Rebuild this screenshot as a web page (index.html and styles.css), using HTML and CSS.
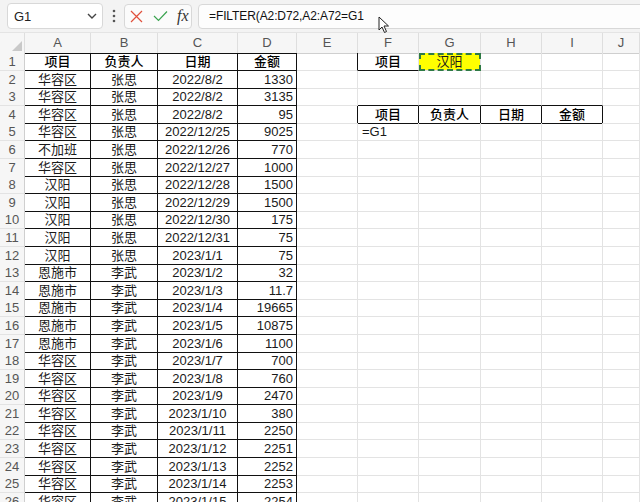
FILE: index.html
```html
<!DOCTYPE html>
<html lang="zh-CN">

<head>
    <meta charset="utf-8">
    <title>FILTER</title>
    <link rel="stylesheet" href="styles.css">
</head>

<body>
    <!-- name box + formula bar -->
    <div class="toolbar">
        <div class="name-box">
            <span>G1</span>
            <svg width="10" height="6" viewBox="0 0 10 6"><path d="M1 1 L5 5 L9 1" fill="none" stroke="#444" stroke-width="1.4"/></svg>
        </div>
        <svg class="more" width="4" height="16" viewBox="0 0 4 16"><circle cx="2" cy="3" r="1.3" fill="#555"/><circle cx="2" cy="8" r="1.3" fill="#555"/><circle cx="2" cy="13" r="1.3" fill="#555"/></svg>
        <div class="fx-box">
            <svg width="13" height="13" viewBox="0 0 13 13"><path d="M1 1 L12 12 M12 1 L1 12" stroke="#e0503c" stroke-width="1.2"/></svg>
            <svg width="15" height="12" viewBox="0 0 15 12"><path d="M1 6 L5.5 10.5 L14 1.5" fill="none" stroke="#3aa34f" stroke-width="1.2"/></svg>
            <span class="fx">fx</span>
        </div>
        <div class="formula-box">=FILTER(A2:D72,A2:A72=G1</div>
    </div>

    <div class="sheet">
        <div class="row head">
            <div class="hd corner"><svg width="10" height="10" viewBox="0 0 10 10"><path d="M10 0 L10 10 L0 10 Z" fill="#c9c9c9"/></svg></div>
            <div class="hd bb">A</div><div class="hd bb">B</div><div class="hd bb">C</div><div class="hd bb">D</div>
            <div class="hd">E</div><div class="hd">F</div><div class="hd">G</div><div class="hd">H</div><div class="hd">I</div><div class="hd">J</div>
        </div>
        <div class="row">
            <div class="rh">1</div>
            <div class="c b ct bold">项目</div><div class="c b ct bold">负责人</div><div class="c b ct bold">日期</div><div class="c b ct bold">金额</div>
            <div class="c br"></div><div class="c bb ct bold">项目</div><div class="c ct sel">汉阳</div><div class="c"></div><div class="c"></div><div class="c"></div>
        </div>
        <div class="row">
            <div class="rh">2</div>
            <div class="c b ct">华容区</div><div class="c b ct">张思</div><div class="c b ct">2022/8/2</div><div class="c b cr">1330</div>
            <div class="c"></div><div class="c"></div><div class="c"></div><div class="c"></div><div class="c"></div><div class="c"></div>
        </div>
        <div class="row">
            <div class="rh">3</div>
            <div class="c b ct">华容区</div><div class="c b ct">张思</div><div class="c b ct">2022/8/2</div><div class="c b cr">3135</div>
            <div class="c"></div><div class="c bb"></div><div class="c bb"></div><div class="c bb"></div><div class="c bb"></div><div class="c"></div>
        </div>
        <div class="row">
            <div class="rh">4</div>
            <div class="c b ct">华容区</div><div class="c b ct">张思</div><div class="c b ct">2022/8/2</div><div class="c b cr">95</div>
            <div class="c br"></div><div class="c b ct bold">项目</div><div class="c b ct bold">负责人</div><div class="c b ct bold">日期</div><div class="c b ct bold">金额</div><div class="c"></div>
        </div>
        <div class="row">
            <div class="rh">5</div>
            <div class="c b ct">华容区</div><div class="c b ct">张思</div><div class="c b ct">2022/12/25</div><div class="c b cr">9025</div>
            <div class="c"></div><div class="c cl">=G1</div><div class="c"></div><div class="c"></div><div class="c"></div><div class="c"></div>
        </div>
        <div class="row">
            <div class="rh">6</div>
            <div class="c b ct">不加班</div><div class="c b ct">张思</div><div class="c b ct">2022/12/26</div><div class="c b cr">770</div>
            <div class="c"></div><div class="c"></div><div class="c"></div><div class="c"></div><div class="c"></div><div class="c"></div>
        </div>
        <div class="row">
            <div class="rh">7</div>
            <div class="c b ct">华容区</div><div class="c b ct">张思</div><div class="c b ct">2022/12/27</div><div class="c b cr">1000</div>
            <div class="c"></div><div class="c"></div><div class="c"></div><div class="c"></div><div class="c"></div><div class="c"></div>
        </div>
        <div class="row">
            <div class="rh">8</div>
            <div class="c b ct">汉阳</div><div class="c b ct">张思</div><div class="c b ct">2022/12/28</div><div class="c b cr">1500</div>
            <div class="c"></div><div class="c"></div><div class="c"></div><div class="c"></div><div class="c"></div><div class="c"></div>
        </div>
        <div class="row">
            <div class="rh">9</div>
            <div class="c b ct">汉阳</div><div class="c b ct">张思</div><div class="c b ct">2022/12/29</div><div class="c b cr">1500</div>
            <div class="c"></div><div class="c"></div><div class="c"></div><div class="c"></div><div class="c"></div><div class="c"></div>
        </div>
        <div class="row">
            <div class="rh">10</div>
            <div class="c b ct">汉阳</div><div class="c b ct">张思</div><div class="c b ct">2022/12/30</div><div class="c b cr">175</div>
            <div class="c"></div><div class="c"></div><div class="c"></div><div class="c"></div><div class="c"></div><div class="c"></div>
        </div>
        <div class="row">
            <div class="rh">11</div>
            <div class="c b ct">汉阳</div><div class="c b ct">张思</div><div class="c b ct">2022/12/31</div><div class="c b cr">75</div>
            <div class="c"></div><div class="c"></div><div class="c"></div><div class="c"></div><div class="c"></div><div class="c"></div>
        </div>
        <div class="row">
            <div class="rh">12</div>
            <div class="c b ct">汉阳</div><div class="c b ct">张思</div><div class="c b ct">2023/1/1</div><div class="c b cr">75</div>
            <div class="c"></div><div class="c"></div><div class="c"></div><div class="c"></div><div class="c"></div><div class="c"></div>
        </div>
        <div class="row">
            <div class="rh">13</div>
            <div class="c b ct">恩施市</div><div class="c b ct">李武</div><div class="c b ct">2023/1/2</div><div class="c b cr">32</div>
            <div class="c"></div><div class="c"></div><div class="c"></div><div class="c"></div><div class="c"></div><div class="c"></div>
        </div>
        <div class="row">
            <div class="rh">14</div>
            <div class="c b ct">恩施市</div><div class="c b ct">李武</div><div class="c b ct">2023/1/3</div><div class="c b cr">11.7</div>
            <div class="c"></div><div class="c"></div><div class="c"></div><div class="c"></div><div class="c"></div><div class="c"></div>
        </div>
        <div class="row">
            <div class="rh">15</div>
            <div class="c b ct">恩施市</div><div class="c b ct">李武</div><div class="c b ct">2023/1/4</div><div class="c b cr">19665</div>
            <div class="c"></div><div class="c"></div><div class="c"></div><div class="c"></div><div class="c"></div><div class="c"></div>
        </div>
        <div class="row">
            <div class="rh">16</div>
            <div class="c b ct">恩施市</div><div class="c b ct">李武</div><div class="c b ct">2023/1/5</div><div class="c b cr">10875</div>
            <div class="c"></div><div class="c"></div><div class="c"></div><div class="c"></div><div class="c"></div><div class="c"></div>
        </div>
        <div class="row">
            <div class="rh">17</div>
            <div class="c b ct">恩施市</div><div class="c b ct">李武</div><div class="c b ct">2023/1/6</div><div class="c b cr">1100</div>
            <div class="c"></div><div class="c"></div><div class="c"></div><div class="c"></div><div class="c"></div><div class="c"></div>
        </div>
        <div class="row">
            <div class="rh">18</div>
            <div class="c b ct">华容区</div><div class="c b ct">李武</div><div class="c b ct">2023/1/7</div><div class="c b cr">700</div>
            <div class="c"></div><div class="c"></div><div class="c"></div><div class="c"></div><div class="c"></div><div class="c"></div>
        </div>
        <div class="row">
            <div class="rh">19</div>
            <div class="c b ct">华容区</div><div class="c b ct">李武</div><div class="c b ct">2023/1/8</div><div class="c b cr">760</div>
            <div class="c"></div><div class="c"></div><div class="c"></div><div class="c"></div><div class="c"></div><div class="c"></div>
        </div>
        <div class="row">
            <div class="rh">20</div>
            <div class="c b ct">华容区</div><div class="c b ct">李武</div><div class="c b ct">2023/1/9</div><div class="c b cr">2470</div>
            <div class="c"></div><div class="c"></div><div class="c"></div><div class="c"></div><div class="c"></div><div class="c"></div>
        </div>
        <div class="row">
            <div class="rh">21</div>
            <div class="c b ct">华容区</div><div class="c b ct">李武</div><div class="c b ct">2023/1/10</div><div class="c b cr">380</div>
            <div class="c"></div><div class="c"></div><div class="c"></div><div class="c"></div><div class="c"></div><div class="c"></div>
        </div>
        <div class="row">
            <div class="rh">22</div>
            <div class="c b ct">华容区</div><div class="c b ct">李武</div><div class="c b ct">2023/1/11</div><div class="c b cr">2250</div>
            <div class="c"></div><div class="c"></div><div class="c"></div><div class="c"></div><div class="c"></div><div class="c"></div>
        </div>
        <div class="row">
            <div class="rh">23</div>
            <div class="c b ct">华容区</div><div class="c b ct">李武</div><div class="c b ct">2023/1/12</div><div class="c b cr">2251</div>
            <div class="c"></div><div class="c"></div><div class="c"></div><div class="c"></div><div class="c"></div><div class="c"></div>
        </div>
        <div class="row">
            <div class="rh">24</div>
            <div class="c b ct">华容区</div><div class="c b ct">李武</div><div class="c b ct">2023/1/13</div><div class="c b cr">2252</div>
            <div class="c"></div><div class="c"></div><div class="c"></div><div class="c"></div><div class="c"></div><div class="c"></div>
        </div>
        <div class="row">
            <div class="rh">25</div>
            <div class="c b ct">华容区</div><div class="c b ct">李武</div><div class="c b ct">2023/1/14</div><div class="c b cr">2253</div>
            <div class="c"></div><div class="c"></div><div class="c"></div><div class="c"></div><div class="c"></div><div class="c"></div>
        </div>
        <div class="row">
            <div class="rh">26</div>
            <div class="c b ct">华容区</div><div class="c b ct">李武</div><div class="c b ct">2023/1/15</div><div class="c b cr">2254</div>
            <div class="c"></div><div class="c"></div><div class="c"></div><div class="c"></div><div class="c"></div><div class="c"></div>
        </div>
    </div>

    <!-- mouse pointer over the formula bar -->
    <svg class="pointer" width="12" height="18" viewBox="0 0 12 18"><path d="M1 1 L1 14 L4 11 L6.5 16.5 L8.5 15.5 L6 10 L10.5 10 Z" fill="#fff" stroke="#222" stroke-width="1"/></svg>
</body>

</html>
```

FILE: styles.css
```css
body {
    margin: 0;
    width: 640px;
    height: 502px;
    overflow: hidden;
    background-color: #ffffff;
    font-family: "Liberation Sans", "Noto Sans CJK SC", sans-serif;
    color: #000000;
    position: relative;
}

/* top bar */
.toolbar {
    display: flex;
    align-items: center;
    height: 33px;
    padding: 0 0 0 7px;
    box-sizing: border-box;
    background-color: #f3f3f3;
    border-bottom: 1px solid #e4e4e4;
}

.name-box {
    display: flex;
    align-items: center;
    justify-content: space-between;
    width: 96px;
    height: 26px;
    box-sizing: border-box;
    padding: 0 5px 0 6px;
    background-color: #ffffff;
    border: 1px solid #d8d8d8;
    border-radius: 4px;
    font-size: 13px;
    color: #222;
}

.more {
    margin-left: 9px;
}

.fx-box {
    display: flex;
    align-items: center;
    gap: 10px;
    width: 68px;
    height: 25px;
    margin-left: 8px;
    box-sizing: border-box;
    padding-left: 5px;
    background-color: #fbfbfb;
    border: 1px solid #d8d8d8;
    border-radius: 4px;
}

.fx {
    font-family: "Liberation Serif", serif;
    font-style: italic;
    font-size: 16px;
    color: #333;
    margin-left: -1px;
}

.formula-box {
    flex: 1;
    height: 25px;
    margin-left: 6px;
    margin-right: -6px;
    box-sizing: border-box;
    padding-left: 10px;
    line-height: 23px;
    background-color: #fdfdfd;
    border: 1px solid #d8d8d8;
    border-radius: 4px;
    font-size: 12px;
    letter-spacing: -0.1px;
    color: #111;
    white-space: nowrap;
}

/* grid */
.sheet {
    display: flex;
    flex-direction: column;
}

.row {
    display: grid;
    grid-template-columns: 25px 66px 67px 80px 59px 61px 61px 62px 61px 61px 1fr;
    height: 17.6px;
    flex-shrink: 0;
}

.row.head {
    height: 20px;
}

.hd {
    box-sizing: border-box;
    background-color: #f6f6f6;
    border-right: 1px solid #dedede;
    border-bottom: 1px solid #cfcfcf;
    font-size: 13px;
    line-height: 20px;
    color: #555;
    text-align: center;
}

.corner {
    display: flex;
    align-items: flex-end;
    justify-content: flex-end;
    padding: 0 2px 2px 0;
}

.rh {
    box-sizing: border-box;
    background-color: #f6f6f6;
    border-right: 1px solid #cfcfcf;
    border-bottom: 1px solid #e3e3e3;
    font-size: 13px;
    line-height: 17px;
    color: #555;
    text-align: center;
}

.c {
    box-sizing: border-box;
    border-right: 1px solid #e3e3e3;
    border-bottom: 1px solid #e3e3e3;
    font-size: 13px;
    line-height: 17px;
    padding: 0 3px;
    white-space: nowrap;
    overflow: hidden;
    color: #1a1a1a;
}

.ct {
    text-align: center;
}

.cr {
    text-align: right;
}

.cl {
    text-align: left;
    padding-left: 4px;
}

.bold {
    font-weight: 500;
    color: #000;
}

/* black cell borders */
.b {
    border-right-color: #111;
    border-bottom-color: #111;
}

.hd.bb,
.c.bb {
    border-bottom-color: #111;
}

.br {
    border-right-color: #111;
}

/* copied cell */
.sel {
    background-color: #ffff00;
    outline: 2px dashed #2f7a45;
    outline-offset: -2px;
}

.pointer {
    position: absolute;
    left: 378px;
    top: 16px;
}
```
